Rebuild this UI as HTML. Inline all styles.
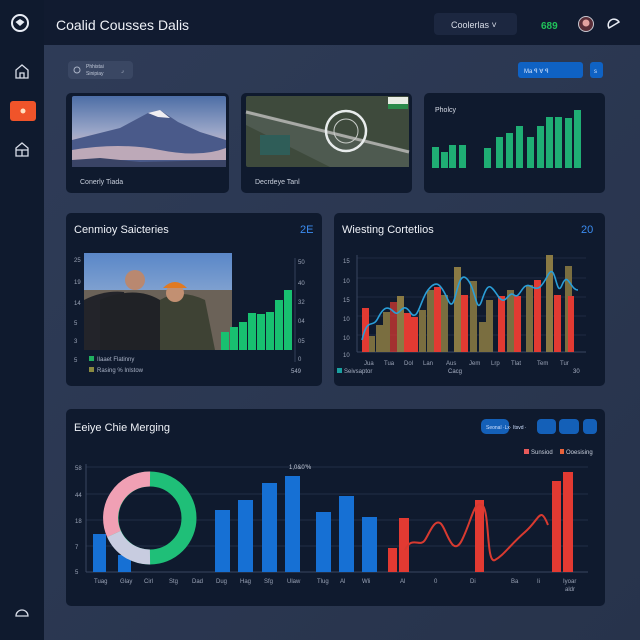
<!DOCTYPE html>
<html><head><meta charset="utf-8"><style>
html,body{margin:0;padding:0;background:#2a3650;}
svg{display:block;font-family:"Liberation Sans",sans-serif;}
</style></head><body>
<svg width="640" height="640" viewBox="0 0 640 640" xmlns="http://www.w3.org/2000/svg">
<defs>
<linearGradient id="main" x1="0" y1="0" x2="1" y2="1"><stop offset="0" stop-color="#2f3c58"/><stop offset="1" stop-color="#27334b"/></linearGradient>
<linearGradient id="sky" x1="0" y1="0" x2="0" y2="1"><stop offset="0" stop-color="#4d6ea6"/><stop offset="0.5" stop-color="#9aa6c8"/><stop offset="0.8" stop-color="#d7b9c2"/><stop offset="1" stop-color="#8f8fa8"/></linearGradient>
<linearGradient id="sky2" x1="0" y1="0" x2="0" y2="1"><stop offset="0" stop-color="#5a87c8"/><stop offset="1" stop-color="#b8c8dc"/></linearGradient>
</defs>
<rect width="640" height="640" fill="url(#main)"/>
<!-- top bar & sidebar -->
<rect x="0" y="0" width="640" height="45" fill="#111b30"/>
<rect x="0" y="0" width="44" height="640" fill="#0f1a2e"/>
<circle cx="20" cy="23" r="8" fill="none" stroke="#e8ecf4" stroke-width="2"/>
<path d="M15.5 22 l4.5 -3 l4.5 3 l-4.5 4z" fill="#e8ecf4"/>
<text x="56" y="30" font-size="14" fill="#eef1f7">Coalid Cousses Dalis</text>
<rect x="434" y="13" width="83" height="22" rx="4" fill="#1c2740"/>
<text x="451" y="28" font-size="9" fill="#d8dde8">Coolerlas  ˅</text>
<text x="541" y="29" font-size="10" font-weight="bold" fill="#21c35a">689</text>
<circle cx="586" cy="24" r="7.5" fill="#5a2e38" stroke="#c8c8d0" stroke-width="1"/>
<circle cx="586" cy="23" r="3.5" fill="#e4a2a0"/>
<path d="M609 28 a5 5 0 1 1 10 -6 z" fill="none" stroke="#e8ecf4" stroke-width="1.5"/>
<!-- sidebar icons -->
<path d="M16 78 v-8 l6 -5 l6 5 v8 z M20 78 v-5 h4 v5" fill="none" stroke="#d8dde8" stroke-width="1.3"/>
<rect x="10" y="101" width="26" height="20" rx="3" fill="#f0542a"/>
<circle cx="23" cy="111" r="2.5" fill="#ffe0c0"/>
<path d="M16 156 v-8 l6 -5 l6 5 v8 z M16 150 h12 M22 150 v6" fill="none" stroke="#d8dde8" stroke-width="1.3"/>
<path d="M16 616 a6 6 0 1 1 12 0 z M18 616 h8" fill="none" stroke="#d8dde8" stroke-width="1.3"/>
<!-- pill and buttons -->
<rect x="68" y="61" width="65" height="18" rx="4" fill="#3a4763"/>
<circle cx="77" cy="70" r="3" fill="none" stroke="#aab3c6" stroke-width="1"/>
<text x="86" y="68" font-size="5" fill="#c0c8d8">Phhistai</text>
<text x="86" y="75" font-size="5" fill="#c0c8d8">Sinipiay</text>
<text x="121" y="72" font-size="6" fill="#c0c8d8">⌟</text>
<rect x="518" y="62" width="65" height="16" rx="3" fill="#0f62c4"/>
<text x="524" y="73" font-size="6" fill="#d6e6ff">Ma   ꟼ   ∀   ꟼ</text>
<rect x="590" y="62" width="13" height="16" rx="3" fill="#0f62c4"/>
<text x="594" y="73" font-size="6" fill="#d6e6ff">s</text>
<!-- row 1 cards -->
<rect x="66" y="93" width="163" height="100" rx="5" fill="#0f1a2e"/>
<rect x="72" y="96" width="154" height="71" rx="2" fill="url(#sky)"/>
<path d="M72 140 L120 128 L148 113 L160 110 L178 122 L200 132 L226 140 V167 H72z" fill="#4a5a8a"/>
<path d="M148 113 L160 110 L170 118 L158 117 z" fill="#f0eef2"/>
<path d="M72 150 Q120 142 160 150 T226 148 V160 H72z" fill="#d9bdc3" opacity="0.8"/>
<path d="M72 160 L100 158 L140 162 L226 160 V167 H72z" fill="#3a4466"/>
<text x="80" y="184" font-size="7" fill="#c8cfdc">Conerly Tiada</text>
<rect x="241" y="93" width="171" height="100" rx="5" fill="#0f1a2e"/>
<rect x="246" y="96" width="163" height="71" rx="2" fill="#3e4a3c"/>
<path d="M246 110 L409 150 L409 167 L330 167 L246 125z" fill="#4e5a50"/>
<path d="M246 112 L409 152" stroke="#a8aaa6" stroke-width="3"/>
<rect x="260" y="135" width="30" height="20" fill="#2f5d58"/>
<circle cx="346" cy="131" r="20" fill="none" stroke="#e8ecec" stroke-width="2.5"/>
<circle cx="346" cy="131" r="12" fill="none" stroke="#c8ccc8" stroke-width="1"/>
<rect x="388" y="97" width="20" height="12" fill="#e8ece4"/>
<rect x="388" y="104" width="20" height="5" fill="#2b8a4a"/>
<text x="255" y="184" font-size="7" fill="#c8cfdc">Decrdeye Tanl</text>
<rect x="424" y="93" width="181" height="100" rx="5" fill="#0f1a2e"/>
<text x="435" y="112" font-size="7" fill="#d8dde8">Pholcy</text>
<g fill="#1fae74">
<rect x="432" y="147" width="7" height="21"/><rect x="441" y="152" width="7" height="16"/><rect x="449" y="145" width="7" height="23"/><rect x="459" y="145" width="7" height="23"/>
<rect x="484" y="148" width="7" height="20"/><rect x="496" y="137" width="7" height="31"/><rect x="506" y="133" width="7" height="35"/><rect x="516" y="126" width="7" height="42"/><rect x="527" y="137" width="7" height="31"/><rect x="537" y="126" width="7" height="42"/><rect x="546" y="117" width="7" height="51"/><rect x="555" y="117" width="7" height="51"/><rect x="565" y="118" width="7" height="50"/><rect x="574" y="110" width="7" height="58"/>
</g>
<!-- row 2 left -->
<rect x="66" y="213" width="256" height="173" rx="5" fill="#0f1a2e"/>
<text x="74" y="233" font-size="11" fill="#eef1f7">Cenmioy Saicteries</text>
<text x="300" y="233" font-size="11" fill="#3b8cf0">2E</text>
<g font-size="6" fill="#9aa3b6">
<text x="74" y="262">25</text><text x="74" y="284">19</text><text x="74" y="305">14</text><text x="74" y="325">5</text><text x="74" y="343">3</text><text x="74" y="362">5</text>
<text x="298" y="264">50</text><text x="298" y="285">40</text><text x="298" y="304">32</text><text x="298" y="323">04</text><text x="298" y="343">05</text><text x="298" y="361">0</text>
</g>
<line x1="295" y1="258" x2="295" y2="362" stroke="#33405a" stroke-width="1"/>
<rect x="84" y="253" width="148" height="97" fill="url(#sky2)"/>
<rect x="84" y="290" width="148" height="60" fill="#6b6258"/>
<path d="M84 300 q20 -10 40 -8 l10 58 h-50z" fill="#23242a"/>
<circle cx="135" cy="280" r="10" fill="#b98870"/>
<path d="M100 300 q35 -15 60 0 v50 h-60z" fill="#202226"/>
<path d="M160 300 q20 -12 45 0 l10 50 h-55z" fill="#3e4234"/>
<circle cx="175" cy="293" r="9" fill="#c29072"/>
<path d="M163 288 q12 -12 24 0 z" fill="#e07a22"/>
<g fill="#18c070">
<rect x="221" y="332" width="8" height="18"/><rect x="230" y="327" width="8" height="23"/><rect x="239" y="322" width="8" height="28"/><rect x="248" y="313" width="8" height="37"/><rect x="257" y="314" width="8" height="36"/><rect x="266" y="312" width="8" height="38"/><rect x="275" y="300" width="8" height="50"/><rect x="284" y="290" width="8" height="60"/>
</g>
<rect x="89" y="356" width="5" height="5" fill="#20b060"/>
<text x="97" y="361" font-size="6" fill="#aab3c6">Ilaaet   Flatinny</text>
<rect x="89" y="367" width="5" height="5" fill="#8a8a40"/>
<text x="97" y="372" font-size="6" fill="#aab3c6">Rasing % Inlstow</text>
<text x="291" y="373" font-size="6" fill="#aab3c6">549</text>
<!-- row 2 right -->
<rect x="334" y="213" width="271" height="173" rx="5" fill="#0f1a2e"/>
<text x="342" y="233" font-size="11" fill="#eef1f7">Wiesting Cortetlios</text>
<text x="581" y="233" font-size="11" fill="#3b8cf0">20</text>
<g stroke="#26324a" stroke-width="0.7">
<line x1="357" y1="258" x2="586" y2="258"/><line x1="357" y1="278" x2="586" y2="278"/><line x1="357" y1="297" x2="586" y2="297"/><line x1="357" y1="316" x2="586" y2="316"/><line x1="357" y1="335" x2="586" y2="335"/>
</g>
<line x1="357" y1="255" x2="357" y2="352" stroke="#3a4660"/>
<line x1="357" y1="352" x2="586" y2="352" stroke="#3a4660"/>
<g font-size="6" fill="#9aa3b6"><text x="343" y="263">15</text><text x="343" y="283">10</text><text x="343" y="302">15</text><text x="343" y="321">10</text><text x="343" y="340">10</text><text x="343" y="357">10</text></g>
<g>
<rect x="362" y="308" width="7" height="44" fill="#e23a32"/>
<rect x="369" y="336" width="6" height="16" fill="#7a6e40"/>
<rect x="376" y="325" width="7" height="27" fill="#7a6e40"/>
<rect x="383" y="312" width="7" height="40" fill="#7a6e40"/>
<rect x="390" y="302" width="7" height="50" fill="#e23a32" opacity="0.7"/>
<rect x="397" y="296" width="7" height="56" fill="#8a7a44"/>
<rect x="404" y="313" width="7" height="39" fill="#e23a32"/>
<rect x="411" y="317" width="7" height="35" fill="#e23a32"/>
<rect x="419" y="310" width="7" height="42" fill="#7a6e40"/>
<rect x="427" y="290" width="7" height="62" fill="#7a6e40"/>
<rect x="434" y="287" width="7" height="65" fill="#e23a32"/>
<rect x="441" y="295" width="7" height="57" fill="#7a6e40"/>
<rect x="454" y="267" width="7" height="85" fill="#8a7a44"/>
<rect x="461" y="295" width="7" height="57" fill="#e23a32"/>
<rect x="470" y="281" width="7" height="71" fill="#7a6e40"/>
<rect x="479" y="322" width="7" height="30" fill="#7a6e40"/>
<rect x="486" y="300" width="7" height="52" fill="#7a6e40"/>
<rect x="498" y="296" width="7" height="56" fill="#e23a32"/>
<rect x="507" y="290" width="7" height="62" fill="#7a6e40"/>
<rect x="514" y="296" width="7" height="56" fill="#e23a32"/>
<rect x="526" y="285" width="7" height="67" fill="#7a6e40"/>
<rect x="534" y="280" width="7" height="72" fill="#e23a32"/>
<rect x="546" y="255" width="7" height="97" fill="#8a7a44"/>
<rect x="554" y="295" width="7" height="57" fill="#e23a32"/>
<rect x="565" y="266" width="7" height="86" fill="#7a6e40"/>
<rect x="568" y="296" width="6" height="56" fill="#e23a32"/>
</g>
<path d="M362 340 C368 315 372 330 378 318 S388 306 394 312 S402 300 410 312 S420 300 428 290 S440 282 448 300 S456 270 466 278 S476 318 482 300 S490 284 498 296 S508 290 514 295 S522 282 530 286 S540 290 548 275 S556 300 562 285 S570 290 578 290" fill="none" stroke="#2a9ed8" stroke-width="1.6"/>
<g font-size="6" fill="#9aa3b6"><text x="364" y="365">Jua</text><text x="384" y="365">Tua</text><text x="404" y="365">Dol</text><text x="423" y="365">Lan</text><text x="446" y="365">Aus</text><text x="469" y="365">Jem</text><text x="491" y="365">Lrp</text><text x="511" y="365">Tlat</text><text x="537" y="365">Tem</text><text x="560" y="365">Tur</text></g>
<rect x="337" y="368" width="5" height="5" fill="#1aa0a0"/>
<text x="344" y="373" font-size="6" fill="#aab3c6">Seivsaptor</text>
<text x="448" y="373" font-size="6" fill="#aab3c6">Cacg</text>
<text x="573" y="373" font-size="6" fill="#aab3c6">30</text>
<!-- bottom card -->
<rect x="66" y="409" width="539" height="197" rx="5" fill="#0f1a2e"/>
<text x="74" y="431" font-size="11" fill="#eef1f7">Eeiye Chie Merging</text>
<rect x="481" y="419" width="28" height="15" rx="5" fill="#1460b8"/>
<rect x="537" y="419" width="19" height="15" rx="4" fill="#1460b8"/>
<rect x="559" y="419" width="20" height="15" rx="4" fill="#1460b8"/>
<rect x="583" y="419" width="14" height="15" rx="4" fill="#1460b8"/>
<text x="486" y="429" font-size="5" fill="#cfe0ff">Seonal   ·Lx·   Itsvd    ·</text>
<rect x="524" y="449" width="5" height="5" fill="#e85a5a"/>
<text x="531" y="454" font-size="6" fill="#c8cfdc">Sunsiod</text>
<rect x="560" y="449" width="4" height="5" fill="#e8623a"/>
<text x="566" y="454" font-size="6" fill="#c8cfdc">Ooesising</text>
<g stroke="#2a3650" stroke-width="0.7">
<line x1="86" y1="467" x2="588" y2="467"/><line x1="86" y1="494" x2="588" y2="494"/><line x1="86" y1="520" x2="588" y2="520"/><line x1="86" y1="546" x2="588" y2="546"/>
</g>
<line x1="86" y1="572" x2="588" y2="572" stroke="#3a4660"/>
<line x1="86" y1="464" x2="86" y2="572" stroke="#3a4660"/>
<g font-size="6" fill="#9aa3b6"><text x="75" y="470">58</text><text x="75" y="497">44</text><text x="75" y="523">18</text><text x="75" y="549">7</text><text x="75" y="574">5</text></g>
<text x="289" y="469" font-size="6" fill="#c8cfdc">1,0&amp;0'%</text>
<g fill="#1670d4">
<rect x="93" y="534" width="13" height="38"/><rect x="118" y="555" width="13" height="17"/>
<rect x="215" y="510" width="15" height="62"/><rect x="238" y="500" width="15" height="72"/><rect x="262" y="483" width="15" height="89"/><rect x="285" y="476" width="15" height="96"/>
<rect x="316" y="512" width="15" height="60"/><rect x="339" y="496" width="15" height="76"/><rect x="362" y="517" width="15" height="55"/>
</g>
<g fill="#e23a32">
<rect x="388" y="548" width="9" height="24"/><rect x="399" y="518" width="10" height="54"/><rect x="475" y="500" width="9" height="72"/><rect x="552" y="481" width="9" height="91"/><rect x="563" y="472" width="10" height="100"/>
</g>
<path d="M405 550 C412 535 420 548 425 540 S434 520 440 523 S452 560 462 540 S474 500 482 505 S486 565 495 560 S510 545 525 532 S540 505 548 525" fill="none" stroke="#d83a30" stroke-width="2"/>
<circle cx="150" cy="518" r="39" fill="none" stroke="#1fbf78" stroke-width="15"/>
<path d="M150 479 A39 39 0 0 0 114 534" fill="none" stroke="#f0a0b4" stroke-width="15"/>
<path d="M114 534 A39 39 0 0 0 150 557" fill="none" stroke="#c8cce0" stroke-width="15"/>
<g font-size="6" fill="#9aa3b6"><text x="94" y="583">Tuag</text><text x="120" y="583">Glay</text><text x="144" y="583">Cirl</text><text x="169" y="583">Stg</text><text x="192" y="583">Dad</text><text x="216" y="583">Dug</text><text x="240" y="583">Hag</text><text x="264" y="583">Sfg</text><text x="287" y="583">Ulaw</text><text x="317" y="583">Tlug</text><text x="340" y="583">Al</text><text x="362" y="583">Wli</text><text x="400" y="583">Al</text><text x="434" y="583">0</text><text x="470" y="583">Di</text><text x="511" y="583">Ba</text><text x="537" y="583">Ii</text><text x="563" y="583">Iyoar</text><text x="565" y="591">aldr</text></g>
</svg>
</body></html>
